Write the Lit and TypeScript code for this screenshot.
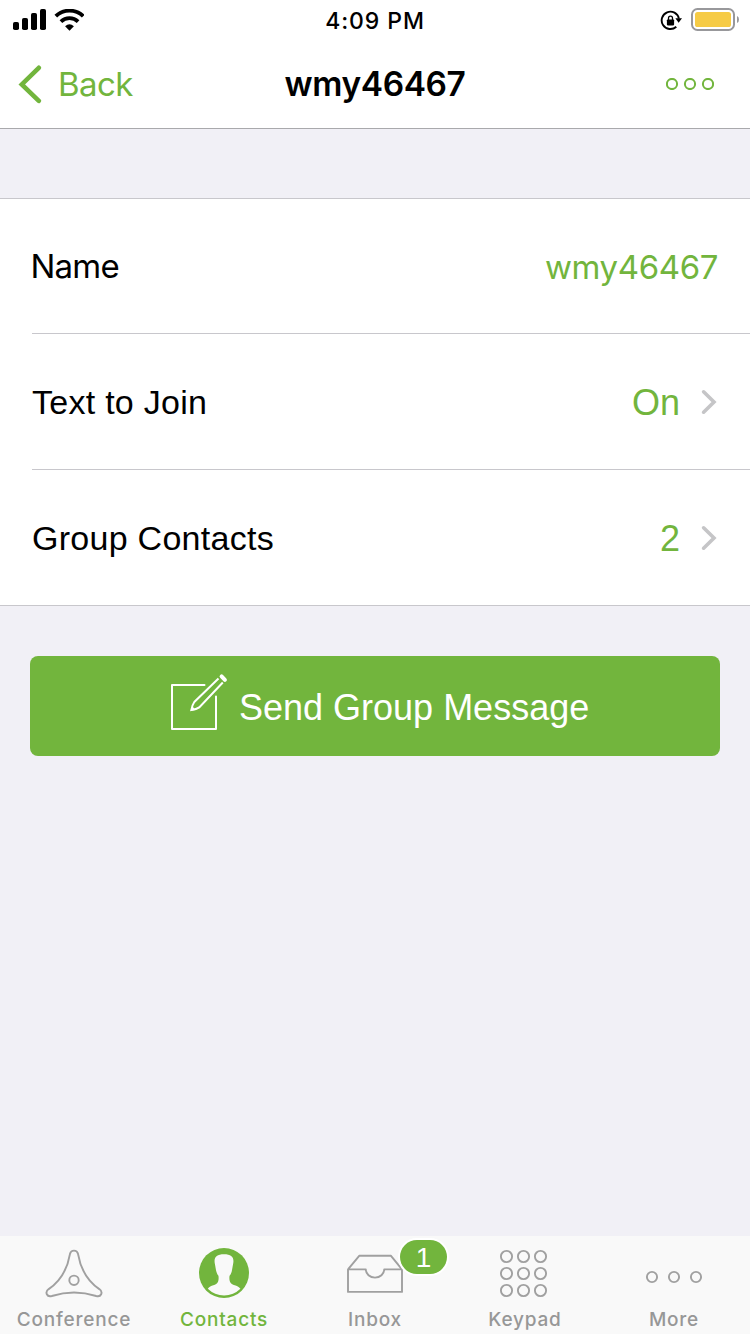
import { LitElement, html, css, svg, nothing } from "lit";
import { customElement, property } from "lit/decorators.js";
import { classMap } from "lit/directives/class-map.js";

const signalIcon = html`<svg class="icon" width="33" height="22" viewBox="13 9 33 22">
  <rect x="13" y="22" width="6" height="8" rx="1.8" />
  <rect x="22" y="18" width="6" height="12" rx="1.8" />
  <rect x="31" y="13" width="6" height="17" rx="1.8" />
  <rect x="40" y="9" width="6" height="21" rx="1.8" />
</svg>`;

const wifiIcon = html`<svg class="icon" width="30" height="22" viewBox="0 0 30 22" fill="none" stroke="#000">
  <path d="M1.8 7.2 A19.6 19.6 0 0 1 29.2 7.2" stroke-width="3.8" />
  <path d="M6.9 12.6 A12.2 12.2 0 0 1 24.1 12.6" stroke-width="3.7" />
  <path d="M11.1 17.2 Q15.5 13.2 19.9 17.2 L15.5 21.8 Z" fill="#000" stroke="none" />
</svg>`;

const rotationLockIcon = html`<svg class="icon" width="22" height="22" viewBox="660 9 22 22">
  <path d="M676.3 26.7 A8.7 8.7 0 1 1 678.9 18.6" fill="none" stroke="#000" stroke-width="1.9" />
  <path d="M675.4 18.2 H682 L678.6 22.8 Z" />
  <rect x="666.9" y="19.4" width="7.2" height="6" rx=".8" />
  <path d="M668.5 20 V18.2 a2 2 0 0 1 4 0 V20" fill="none" stroke="#000" stroke-width="1.3" />
</svg>`;

const batteryIcon = html`<svg class="icon" width="49" height="24" viewBox="691 8 49 24">
  <rect x="692" y="9" width="42" height="21" rx="5.5" fill="none" stroke="#98989b" stroke-width="2" />
  <rect x="695" y="12" width="36" height="15" rx="2.6" fill="#f6cb45" />
  <path d="M737 16 q2 .8 2 3.5 t-2 3.5 Z" fill="#98989b" />
</svg>`;

const backIcon = html`<svg class="icon" width="24" height="40" viewBox="0 0 24 40" fill="none" stroke="#72b53d">
  <path d="M20.8 3.8 L3.8 20.4 L20.8 36.8" stroke-width="4.6" stroke-linecap="round" />
</svg>`;

const ringRow = (gap: number, color: string, width = 1.8) => html`<svg
  class="icon" width=${gap * 2 + 12} height="12" fill="none" stroke=${color}>
  ${[0, 1, 2].map((i) => svg`<circle cx=${6 + i * gap} cy="6" r="5.1" stroke-width=${width} />`)}
</svg>`;

const chevronIcon = html`<svg class="icon" width="16" height="26" viewBox="0 0 16 26" fill="none" stroke="#c5c5c7">
  <path d="M2.6 2.8 L13 13 L2.6 23.2" stroke-width="3.6" stroke-linecap="round" />
</svg>`;

const composeIcon = html`<svg class="icon" width="58" height="58" viewBox="170 673 58 58" fill="none" stroke="#fff" stroke-width="2">
  <path d="M204.5 685 H172 V729 H216 V696.5" stroke-linecap="round" stroke-linejoin="round" />
  <path d="M218.5 678.5 L194.3 702 Q192.4 704.5 191.4 710 Q196.6 709.4 199.2 707.4 L222.8 682.5" />
  <path d="M190.6 711 l1.6 -5 l3.2 4 Z" fill="#fff" stroke="none" />
  <path d="M221.6 676.4 L224.9 679.8" stroke-width="4" stroke-linecap="round" />
</svg>`;

const conferenceIcon = svg`
  <path d="M26 5.8 Q26.8 2.6 30 2.6 Q33.2 2.6 34 5.8 C36.4 19.8 43 32.8 55.3 41.1 C59.6 44.2 57 49.4 52.2 48 C36.5 43 23.5 43 7.8 48 C3 49.4 .4 44.2 4.7 41.1 C17 32.8 23.6 19.8 26 5.8 Z" />
  <circle cx="30" cy="32.3" r="4.7" />`;

const contactsIcon = svg`
  <circle cx="30" cy="25" r="25" fill="#72b53d" stroke="none" />
  <path d="M13.8 40.8 C16.4 37 22.6 37.6 24 33.8 C24.8 31.6 24.8 29 24.3 27.6 C22.3 25 22 22 21 16.5 C19.4 9.6 22 6.2 30 6.2 C38 6.2 40.6 9.6 39 16.5 C38 22 37.9 25 35.7 27.6 C35.2 29 35.2 31.6 36 33.8 C37.4 37.6 43.8 37 46.4 40.8 A23.2 23.2 0 0 1 13.8 40.8 Z" fill="#f9f9f9" stroke="none" />`;

const inboxIcon = svg`
  <path d="M3 21.4 L14.2 7.8 H46 L57 21.4 V43.9 H3 V21.4 H20.8 A9.2 8.2 0 0 0 39.2 21.4 H57" stroke-linejoin="round" />`;

const keypadIcon = svg`${[0, 1, 2].map((r) =>
  [0, 1, 2].map((c) => svg`<circle cx=${11.5 + c * 17} cy=${8.5 + r * 17} r="5.6" />`)
)}`;

const moreIcon = svg`${[0, 1, 2].map((i) => svg`<circle cx=${8 + i * 22} cy="29" r="5.1" />`)}`;

@customElement("status-bar")
class StatusBar extends LitElement {
  static styles = css`
    :host { display: grid; grid-template-columns: 1fr auto 1fr; height: 40px; align-items: center;
      font-family: Inter, sans-serif; }
    .icon { display: block; }
    .left { display: flex; gap: 8px; padding-left: 13px; }
    .time { font-size: 23px; font-weight: 500; letter-spacing: 0.9px; line-height: 38px; padding-top: 2px; }
    .right { display: flex; justify-content: flex-end; align-items: center; gap: 9px; padding-right: 10px; }
  `;
  render() {
    return html`<div class="left">${signalIcon}${wifiIcon}</div>
      <div class="time">4:09 PM</div>
      <div class="right">${rotationLockIcon}${batteryIcon}</div>`;
  }
}

@customElement("nav-bar")
class NavBar extends LitElement {
  @property() heading = "";
  static styles = css`
    :host { display: grid; grid-template-columns: 1fr auto 1fr; height: 88px; align-items: center;
      border-bottom: 1px solid #a9a9ac; font-family: Inter, sans-serif; }
    .icon { display: block; }
    .back { display: flex; align-items: center; gap: 16px; padding-left: 18px; color: #72b53d;
      font-size: 33px; letter-spacing: -0.6px; }
    .title { font-size: 33.5px; font-weight: 600; letter-spacing: -0.4px; }
    .more { display: flex; justify-content: flex-end; padding-right: 36px; }
  `;
  render() {
    return html`<div class="back">${backIcon}<span>Back</span></div>
      <div class="title">${this.heading}</div>
      <div class="more">${ringRow(18, "#72b53d", 2)}</div>`;
  }
}

@customElement("detail-row")
class DetailRow extends LitElement {
  @property() label = "";
  @property() value = "";
  @property({ type: Boolean }) link = false;
  static styles = css`
    :host { display: block; padding-left: 32px; }
    .icon { display: block; }
    .row { display: flex; align-items: center; height: 135px; border-bottom: 1px solid #c8c7cc; }
    :host(:last-of-type) .row { border-bottom: 0; }
    .label { flex: 1; font: 34px "Liberation Sans", sans-serif; letter-spacing: 0.27px; padding-top: 1px; }
    .value { color: #72b53d; font: 36px "Liberation Sans", sans-serif; margin-right: 21px; padding-top: 3px; }
    .chev { margin-right: 33px; }
    .plain { height: 134px; }
    .plain .label { font: 33px Inter, sans-serif; letter-spacing: -0.8px; margin-left: -1.5px; padding: 0; }
    .plain .value { font: 33px Inter, sans-serif; letter-spacing: -0.4px; margin-right: 32px; padding: 1px 0 0; }
  `;
  render() {
    return html`<div class=${classMap({ row: true, plain: !this.link })}>
      <span class="label">${this.label}</span>
      <span class="value">${this.value}</span>
      ${this.link ? html`<span class="chev">${chevronIcon}</span>` : nothing}
    </div>`;
  }
}

@customElement("tab-item")
class TabItem extends LitElement {
  @property() label = "";
  @property() badge = "";
  @property({ attribute: false }) icon: unknown = nothing;
  @property({ type: Boolean }) active = false;
  static styles = css`
    :host { display: flex; flex-direction: column; align-items: center; width: 150px; position: relative;
      padding-top: 12px; font-family: Inter, sans-serif; color: #979797; }
    :host([active]) { color: #72b53d; }
    .icon { display: block; overflow: visible; }
    .label { font-size: 19px; font-weight: 500; line-height: 24px; letter-spacing: 0.8px; margin-top: 10px; }
    .badge { position: absolute; left: 100px; top: 4px; width: 47px; height: 34px; border-radius: 17px;
      background: #72b53d; color: #fff; box-shadow: 0 0 0 2px #fff; text-align: center;
      font: 28px/36px "Liberation Sans", sans-serif; }
  `;
  render() {
    return html`<svg class="icon" width="60" height="50" fill="none" stroke="#a0a0a0" stroke-width="1.9">${this.icon}</svg>
      <span class="label">${this.label}</span>
      ${this.badge ? html`<span class="badge">${this.badge}</span>` : nothing}`;
  }
}

@customElement("app-root")
class AppRoot extends LitElement {
  static styles = css`
    :host { display: flex; flex-direction: column; height: 1334px; width: 750px; background: #f1f0f6;
      overflow: hidden; color: #000; }
    .icon { display: block; }
    .header { background: #fff; }
    .list { margin-top: 69px; background: #fff; border-top: 1px solid #c8c7cc; border-bottom: 1px solid #c8c7cc; }
    .send { display: flex; align-items: center; gap: 11px; margin: 50px 30px 0; height: 100px; box-sizing: border-box;
      padding: 0 0 0 140px; border: 0; border-radius: 8px; background: #72b53d; color: #fff;
      font: 36px "Liberation Sans", sans-serif; letter-spacing: 0; }
    .send span { padding-top: 3px; }
    .send .icon { margin-top: -8px; }
    .tabs { display: flex; height: 98px; margin-top: auto; background: #f9f9f9; }
    .tabs .shifted { margin-left: -1px; margin-right: 1px; }
  `;
  render() {
    return html`
      <div class="header">
        <status-bar></status-bar>
        <nav-bar heading="wmy46467"></nav-bar>
      </div>
      <div class="list">
        <detail-row label="Name" value="wmy46467"></detail-row>
        <detail-row label="Text to Join" value="On" link></detail-row>
        <detail-row label="Group Contacts" value="2" link></detail-row>
      </div>
      <button class="send">${composeIcon}<span>Send Group Message</span></button>
      <div class="tabs">
        <tab-item class="shifted" label="Conference" .icon=${conferenceIcon}></tab-item>
        <tab-item class="shifted" label="Contacts" .icon=${contactsIcon} active></tab-item>
        <tab-item label="Inbox" badge="1" .icon=${inboxIcon}></tab-item>
        <tab-item label="Keypad" .icon=${keypadIcon}></tab-item>
        <tab-item class="shifted" label="More" .icon=${moreIcon}></tab-item>
      </div>`;
  }
}
